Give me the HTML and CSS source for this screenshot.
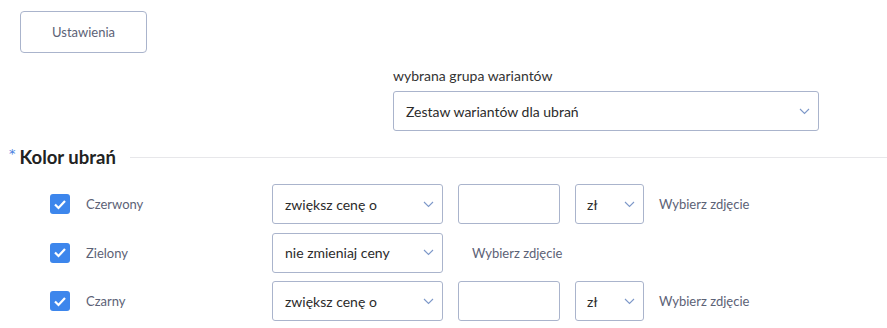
FILE: index.html
```html
<!DOCTYPE html>
<html lang="pl">
<head>
  <meta charset="UTF-8" />
  <meta name="viewport" content="width=device-width, initial-scale=1.0" />
  <title>Warianty</title>
  <link rel="stylesheet" href="styles.css">
</head>
<body>
  <div class="page">
    <button class="btn-settings">Ustawienia</button>

    <!-- wybór grupy -->
    <div class="group">
      <div class="group-label">wybrana grupa wariantów</div>
      <div class="select select-wide">
        <span>Zestaw wariantów dla ubrań</span>
        <svg class="chev" width="11" height="7" viewBox="0 0 11 7"><polyline points="1,1 5.5,5.5 10,1" fill="none" stroke="#7d98c9" stroke-width="1.1"/></svg>
      </div>
    </div>

    <div class="section-head">
      <span class="req">*</span>
      <span class="section-title">Kolor ubrań</span>
      <span class="section-line"></span>
    </div>

    <div class="rows">
      <div class="row">
        <span class="check"><svg width="14" height="11" viewBox="0 0 14 11"><polyline points="2,5.5 5.5,9 12,2" fill="none" stroke="#fff" stroke-width="2.2"/></svg></span>
        <span class="row-label">Czerwony</span>
        <div class="select select-mode">
          <span>zwiększ cenę o</span>
          <svg class="chev" width="11" height="7" viewBox="0 0 11 7"><polyline points="1,1 5.5,5.5 10,1" fill="none" stroke="#7d98c9" stroke-width="1.1"/></svg>
        </div>
        <div class="input-box"></div>
        <div class="select select-cur">
          <span>zł</span>
          <svg class="chev" width="11" height="7" viewBox="0 0 11 7"><polyline points="1,1 5.5,5.5 10,1" fill="none" stroke="#7d98c9" stroke-width="1.1"/></svg>
        </div>
        <span class="pick">Wybierz zdjęcie</span>
      </div>

      <div class="row">
        <span class="check"><svg width="14" height="11" viewBox="0 0 14 11"><polyline points="2,5.5 5.5,9 12,2" fill="none" stroke="#fff" stroke-width="2.2"/></svg></span>
        <span class="row-label">Zielony</span>
        <div class="select select-mode">
          <span>nie zmieniaj ceny</span>
          <svg class="chev" width="11" height="7" viewBox="0 0 11 7"><polyline points="1,1 5.5,5.5 10,1" fill="none" stroke="#7d98c9" stroke-width="1.1"/></svg>
        </div>
        <span class="pick pick-near">Wybierz zdjęcie</span>
      </div>

      <div class="row">
        <span class="check"><svg width="14" height="11" viewBox="0 0 14 11"><polyline points="2,5.5 5.5,9 12,2" fill="none" stroke="#fff" stroke-width="2.2"/></svg></span>
        <span class="row-label">Czarny</span>
        <div class="select select-mode">
          <span>zwiększ cenę o</span>
          <svg class="chev" width="11" height="7" viewBox="0 0 11 7"><polyline points="1,1 5.5,5.5 10,1" fill="none" stroke="#7d98c9" stroke-width="1.1"/></svg>
        </div>
        <div class="input-box"></div>
        <div class="select select-cur">
          <span>zł</span>
          <svg class="chev" width="11" height="7" viewBox="0 0 11 7"><polyline points="1,1 5.5,5.5 10,1" fill="none" stroke="#7d98c9" stroke-width="1.1"/></svg>
        </div>
        <span class="pick">Wybierz zdjęcie</span>
      </div>
    </div>
  </div>
</body>
</html>
```
FILE: styles.css
```css
html, body {
  margin: 0;
  padding: 0;
  background: #fff;
  font-family: 'Lato', 'Open Sans', sans-serif;
  overflow: hidden;
}

.page {
  padding-top: 11px;
}

.btn-settings {
  display: block;
  margin-left: 20px;
  width: 127px;
  height: 42px;
  background: #fff;
  border: 1px solid #aab4cc;
  border-radius: 4px;
  font-family: inherit;
  font-size: 13px;
  color: #5c6276;
  padding: 0;
}

.group {
  margin-left: 393px;
  width: 426px;
  margin-top: 13px;
}

.group-label {
  font-size: 14px;
  line-height: 20px;
  color: #333;
}

.select {
  box-sizing: border-box;
  display: flex;
  align-items: center;
  justify-content: space-between;
  height: 40px;
  border: 1px solid #aab4cc;
  border-radius: 3px;
  background: #fff;
  font-size: 14px;
  color: #2b2b2b;
}

.select-wide {
  margin-top: 5px;
  padding: 0 8px 0 12px;
}

.section-head {
  display: flex;
  align-items: center;
  margin-top: 12px;
  height: 28px;
}

.req {
  color: #4a7fe0;
  font-family: 'DejaVu Sans', sans-serif;
  font-size: 13px;
  margin-left: 9px;
  margin-top: 4px;
  align-self: flex-start;
  line-height: 14px;
}

.section-title {
  font-size: 18.5px;
  font-weight: bold;
  color: #222;
  margin-left: 4px;
}

.section-line {
  flex: 1;
  height: 1px;
  background: #e7e7ea;
  margin-left: 14px;
}

.rows {
  margin-top: 13px;
  display: flex;
  flex-direction: column;
  gap: 8.5px;
}

.row {
  display: flex;
  align-items: center;
  height: 40px;
}

.check {
  width: 20px;
  height: 20px;
  border-radius: 3px;
  background: #3d86ec;
  margin-left: 50px;
  display: flex;
  align-items: center;
  justify-content: center;
}

.row-label {
  width: 186px;
  margin-left: 16px;
  font-size: 13px;
  color: #5c6276;
}

.select-mode {
  width: 171px;
  padding: 0 8px 0 12px;
}

.input-box {
  box-sizing: border-box;
  width: 102px;
  height: 40px;
  border: 1px solid #aab4cc;
  border-radius: 3px;
  margin-left: 15px;
}

.select-cur {
  width: 69px;
  margin-left: 15px;
  padding: 0 8px 0 11px;
}

.pick {
  margin-left: 15px;
  font-size: 13px;
  color: #5c6276;
}

.pick-near {
  margin-left: 29px;
}
```
